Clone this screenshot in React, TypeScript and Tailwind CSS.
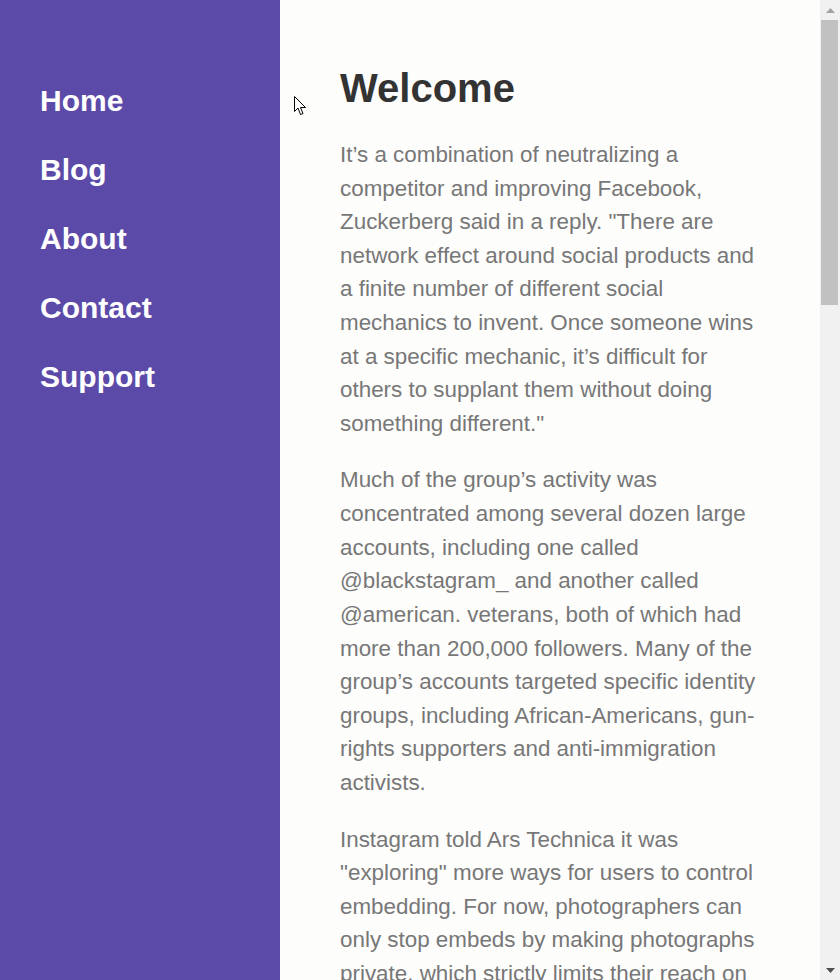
import React from 'react';

const navItems = ['Home', 'Blog', 'About', 'Contact', 'Support'];

const paragraphs = [
  'It’s a combination of neutralizing a competitor and improving Facebook, Zuckerberg said in a reply. "There are network effect around social products and a finite number of different social mechanics to invent. Once someone wins at a specific mechanic, it’s difficult for others to supplant them without doing something different."',
  'Much of the group’s activity was concentrated among several dozen large accounts, including one called @blackstagram_ and another called @american. veterans, both of which had more than 200,000 followers. Many of the group’s accounts targeted specific identity groups, including African-Americans, gun-rights supporters and anti-immigration activists.',
  'Instagram told Ars Technica it was "exploring" more ways for users to control embedding. For now, photographers can only stop embeds by making photographs private, which strictly limits their reach on the platform.',
];

// window scrollbar as it appears in the capture
const Scrollbar = () => (
  <div className="flex w-5 shrink-0 flex-col bg-[#f1f1f1]">
    <div className="flex h-5 items-center justify-center">
      <svg width="9" height="5" viewBox="0 0 9 5">
        <path d="M4.5 0 L9 5 L0 5 Z" fill="#a3a3a3" />
      </svg>
    </div>
    <div className="pl-[1px] pr-[2px]">
      <div className="h-[285px] bg-[#c1c1c1]" />
    </div>
    <div className="flex-1" />
    <div className="flex h-5 items-center justify-center">
      <svg width="9" height="5" viewBox="0 0 9 5">
        <path d="M0 0 L9 0 L4.5 5 Z" fill="#505050" />
      </svg>
    </div>
  </div>
);

export default function App() {
  return (
    <div className="relative flex h-screen w-full overflow-hidden font-['Liberation_Sans',Arial,sans-serif]">
      {/* Sidebar */}
      <aside className="w-[280px] shrink-0 bg-[#5c4aa9]">
        <nav className="flex flex-col gap-[35px] pl-[40px] pt-[84px]">
          {navItems.map((item) => (
            <a key={item} href="#" className="block text-[30px] leading-[34px] font-bold text-white">
              {item}
            </a>
          ))}
        </nav>
      </aside>

      {/* Main content */}
      <main className="flex-1 overflow-hidden bg-[#fdfdfc]">
        <div className="px-[60px] pt-[64px] pb-[60px]">
          <h1 className="text-[40px] leading-[48px] font-bold text-[#333333]">Welcome</h1>
          <div className="mt-[26px] flex flex-col gap-[23px]">
            {paragraphs.map((p, i) => (
              <p key={i} className="text-[22.4px] leading-[1.5] text-[#777777]">
                {p}
              </p>
            ))}
          </div>
        </div>
      </main>

      <Scrollbar />

      {/* mouse pointer */}
      <svg className="absolute left-[294px] top-[96px]" width="13" height="20" viewBox="0 0 13 20">
        <path d="M0.5 0.5 L0.5 15.5 L4 12 L6.5 18.5 L9 17.5 L6.5 11.5 L11.5 11.5 Z" fill="#ffffff" stroke="#000000" strokeWidth="1" strokeLinejoin="miter" />
      </svg>
    </div>
  );
}
